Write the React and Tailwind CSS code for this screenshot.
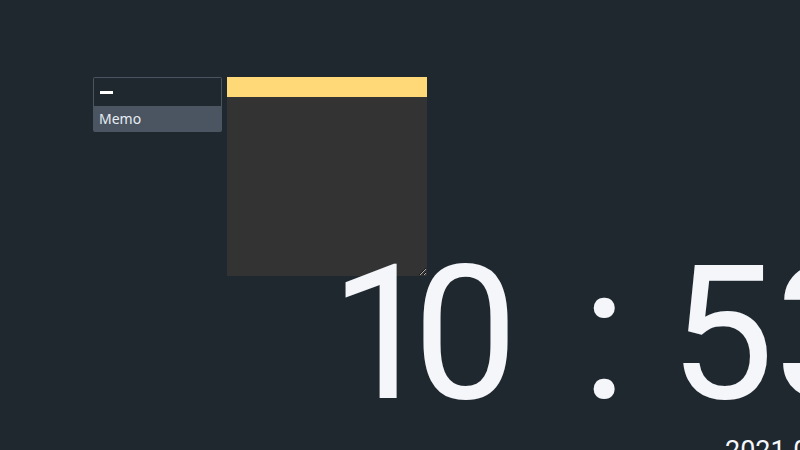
import React from "react";

const uiFont = { fontFamily: '"Noto Sans", "Open Sans", sans-serif' };
const clockFont = { fontFamily: 'Roboto, "Noto Sans", sans-serif' };

const MemoMenu = () => {
  return (
    <div className="w-[129px] rounded-[2px] bg-[#4a5561] p-px">
      <div className="h-[28px] bg-[#1f272f] flex items-center pl-[6px]">
        <div className="w-[13px] h-[3px] bg-white" />
      </div>
      <div className="h-[25px] flex items-center pl-[5px] text-[14px] text-[#e8edf3]">
        Memo
      </div>
    </div>
  );
};

const StickyNote = () => {
  return (
    <div className="w-[200px] h-[199px] flex flex-col">
      <div className="h-[20px] bg-[#ffd978]" />
      <textarea className="flex-1 w-full bg-[#333333] resize outline-none border-0 text-white text-sm p-1" />
    </div>
  );
};

const App = () => {
  return (
    <div className="w-[800px] h-[450px] overflow-hidden bg-[#1f272f] text-white" style={uiFont}>
      <div className="flex items-start gap-[5px] pt-[77px] pl-[93px]">
        <MemoMenu />
        <StickyNote />
      </div>
      <div className="pl-[330px] -mt-[35px] whitespace-nowrap text-[#f4f6fa]" style={clockFont}>
        <div className="text-[187px] leading-none">
          <span className="mr-[-22px]">1</span>0<span className="ml-[17px] mr-[-4px]"> : </span>53
        </div>
        <div className="pl-[395px] mt-[10px] text-[27px] leading-none">2021-06-18</div>
      </div>
    </div>
  );
};

export default App;
